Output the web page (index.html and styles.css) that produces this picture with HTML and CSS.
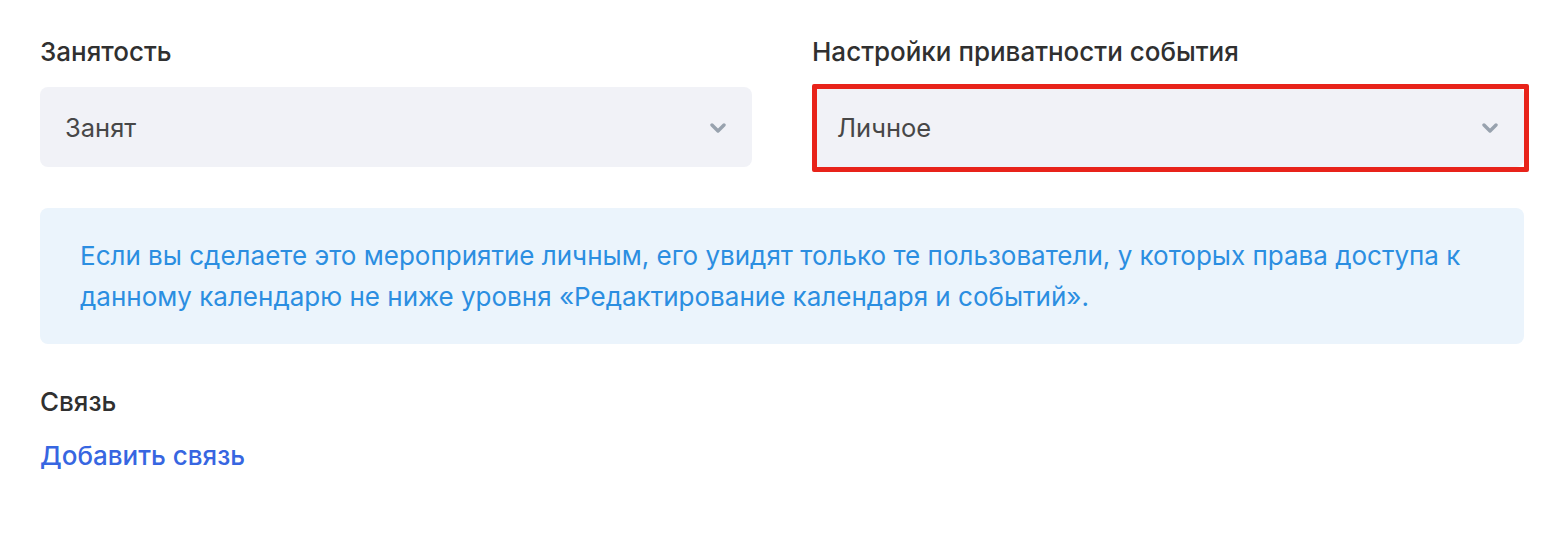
FILE: index.html
```html
<!DOCTYPE html>
<html lang="ru">
<head>
<meta charset="utf-8">
<link rel="stylesheet" href="styles.css">
</head>
<body>
<div class="page">
  <div class="row">
    <div class="field">
      <div class="label">Занятость</div>
      <div class="select">
        <span class="value">Занят</span>
        <svg class="chev" width="16" height="10" viewBox="0 0 16 10"><path d="M2 2 L8 8 L14 2" fill="none" stroke="#98a2ae" stroke-width="3.4" stroke-linecap="round" stroke-linejoin="round"/></svg>
      </div>
    </div>
    <div class="field">
      <div class="label">Настройки приватности события</div>
      <div class="select highlighted">
        <span class="value">Личное</span>
        <svg class="chev" width="16" height="10" viewBox="0 0 16 10"><path d="M2 2 L8 8 L14 2" fill="none" stroke="#98a2ae" stroke-width="3.4" stroke-linecap="round" stroke-linejoin="round"/></svg>
        <div class="mark"></div>
      </div>
    </div>
  </div>
  <div class="info">Если вы сделаете это мероприятие личным, его увидят только те пользователи, у которых права доступа к данному календарю не ниже уровня «Редактирование календаря и событий».</div>
  <div class="label link-label">Связь</div>
  <a class="link">Добавить связь</a>
</div>
</body>
</html>
```
FILE: styles.css
```css
html, body { margin: 0; padding: 0; background: #fff; }
body { font-family: Inter, "Noto Sans", sans-serif; color: #333; }
.page { padding: 36px 34px 0 40px; display: flex; flex-direction: column; align-items: flex-start; }
.row { display: flex; gap: 60px; width: 1484px; }
.field { flex: 1; display: flex; flex-direction: column; }
.label { font-size: 26px; font-weight: 500; color: #303030; line-height: 32px; }
.select { position: relative; margin-top: 19px; height: 80px; border-radius: 8px; background: #f1f2f7; display: flex; align-items: center; justify-content: space-between; padding: 0 26px 0 25px; }
.select .value { font-size: 25.5px; color: #474747; }
.chev { margin-top: 2px; }
.mark { position: absolute; left: 0; top: -3px; right: -5px; bottom: -5px; border: 5px solid #e8231a; border-radius: 2px; }
.info { box-sizing: border-box; margin-top: 41px; width: 1484px; background: #ebf4fc; border-radius: 8px; padding: 27px 40px 27px 40px; font-size: 26px; line-height: 41px; color: #2b8ee1; }
.link-label { margin-top: 42px; }
.link { margin-top: 22px; font-size: 26px; font-weight: 500; color: #3766e1; line-height: 32px; }
```
